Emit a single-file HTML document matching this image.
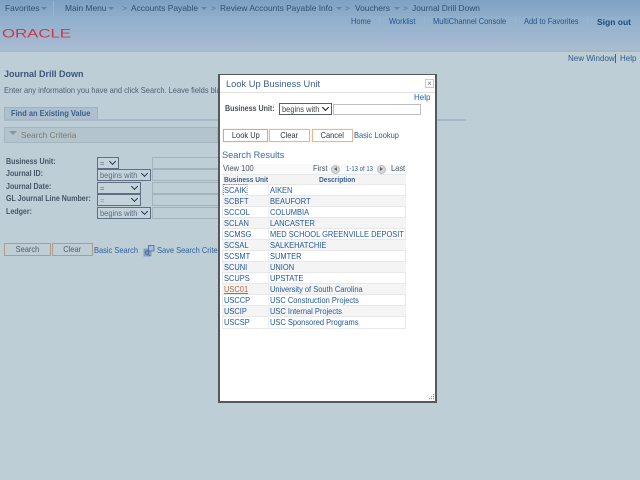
<!DOCTYPE html>
<html><head><meta charset="utf-8"><style>
html,body{margin:0;padding:0}
body{width:640px;height:480px;overflow:hidden;position:relative;background:#bdced7;font-family:"Liberation Sans",sans-serif;font-size:8.4px;color:#3f5f86}
#w{position:absolute;left:0;top:0;width:640px;height:480px;overflow:hidden;filter:blur(.25px)}
.t{position:absolute;white-space:nowrap;line-height:11px}
.b{position:absolute;box-sizing:border-box}
.n,.hl{font-size:8.5px;transform:scaleX(.88);transform-origin:0 50%}
.hl{color:#24548a}
.lab{font-weight:bold;color:#465564;font-size:8.2px;transform:scaleX(.865);transform-origin:0 50%}
.sel{position:absolute;box-sizing:border-box;height:12px;border:1px solid #5d6f80;background:#c4d3db;color:#5c6c7b;font-size:8.5px;line-height:10px;padding-left:2px;white-space:nowrap}
.s{display:inline-block;transform:scaleX(.88);transform-origin:0 50%}
.sel i{position:absolute;right:3px;top:1px;width:4px;height:4px;border-right:1.3px solid #26384a;border-bottom:1.3px solid #26384a;transform:rotate(45deg)}
.inp{position:absolute;box-sizing:border-box;height:12px;border:1px solid #a3b2bb}
.btn,.mbtn{position:absolute;box-sizing:border-box;height:13px;text-align:center;font-size:8.5px;line-height:11px}
.btn span,.mbtn span{display:inline-block;transform:scaleX(.88)}
.btn{border:1px solid #ad9d8c;background:#bfcdd4;color:#4c5d6c}
.mbtn{border:1px solid #e6b88c;background:#fff;color:#333;top:129px;box-shadow:0 0 1px #f0d0b0}
.row{position:absolute;left:222px;width:184px;height:11px;box-sizing:border-box;border-bottom:1px solid #e6e8e9;color:#23579e;font-size:8.6px;line-height:11px}
.row.a{background:#f4f4f4}
.row span{position:absolute;white-space:nowrap;top:0;transform:scaleX(.87);transform-origin:0 50%}
.row .c1{left:2px}.row .c2{left:48px}
.row:before{content:"";position:absolute;left:46px;top:0;bottom:0;width:1px;background:#eceded}
.tr{position:absolute;width:0;height:0}
</style></head><body><div id="w">

<div class="b" style="left:0;top:0;width:640px;height:16px;background:linear-gradient(#7fa2c2,#8dadca)"></div>
<div class="b" style="left:0;top:16px;width:640px;height:35px;background:linear-gradient(#8fb0cc,#9fb6cf 60%,#aabdd2)"></div>
<div class="b" style="left:0;top:50px;width:640px;height:2px;background:#a5b8c6"></div>
<div class="b" style="left:53px;top:1px;width:1px;height:15px;background:#9ab4cb"></div>

<div class="t" style="left:5px;top:3px;color:#2f4f73">Favorites</div>
<div class="tr" style="left:41px;top:7px;border-left:3px solid transparent;border-right:3px solid transparent;border-top:3px solid #5f86aa"></div>
<div class="t" style="left:65px;top:3px;color:#2f4f73">Main Menu</div>
<div class="tr" style="left:108px;top:7px;border-left:3px solid transparent;border-right:3px solid transparent;border-top:3px solid #5f86aa"></div>
<div class="t" style="left:122px;top:3px;color:#56779a">&gt;</div>
<div class="t" style="left:131px;top:3px;color:#2f4f73">Accounts Payable</div>
<div class="tr" style="left:201px;top:7px;border-left:3px solid transparent;border-right:3px solid transparent;border-top:3px solid #5f86aa"></div>
<div class="t" style="left:211px;top:3px;color:#56779a">&gt;</div>
<div class="t" style="left:220px;top:3px;color:#2f4f73">Review Accounts Payable Info</div>
<div class="tr" style="left:336px;top:7px;border-left:3px solid transparent;border-right:3px solid transparent;border-top:3px solid #5f86aa"></div>
<div class="t" style="left:345px;top:3px;color:#56779a">&gt;</div>
<div class="t" style="left:355px;top:3px;color:#2f4f73">Vouchers</div>
<div class="tr" style="left:394px;top:7px;border-left:3px solid transparent;border-right:3px solid transparent;border-top:3px solid #5f86aa"></div>
<div class="t" style="left:403px;top:3px;color:#56779a">&gt;</div>
<div class="t" style="left:412px;top:3px;color:#2f4f73">Journal Drill Down</div>

<svg class="b" style="left:2px;top:27px" width="72" height="13" viewBox="0 0 72 13"><text x="0" y="10.5" font-family="Liberation Sans" font-size="12" textLength="69" lengthAdjust="spacingAndGlyphs" fill="#c9384f">ORACLE</text></svg>

<div class="t hl" style="left:351px;top:16px">Home</div>
<div class="b" style="left:379px;top:17px;width:1px;height:9px;background:#9db5ca"></div>
<div class="t hl" style="left:389px;top:16px">Worklist</div>
<div class="b" style="left:424px;top:17px;width:1px;height:9px;background:#9db5ca"></div>
<div class="t hl" style="left:433px;top:16px">MultiChannel Console</div>
<div class="b" style="left:515px;top:17px;width:1px;height:9px;background:#9db5ca"></div>
<div class="t hl" style="left:524px;top:16px">Add to Favorites</div>
<div class="b" style="left:587px;top:17px;width:1px;height:9px;background:#9db5ca"></div>
<div class="t" style="left:597px;top:17px;color:#1b4a80;font-weight:bold;font-size:8.5px">Sign out</div>

<div class="t" style="left:568px;top:53px;color:#34598a;font-size:8px">New Window</div>
<div class="b" style="left:615px;top:54px;width:1px;height:9px;background:#4b5f73"></div>
<div class="t" style="left:620px;top:53px;color:#34598a;font-size:8px">Help</div>

<div class="t" style="left:4px;top:69px;font-weight:bold;font-size:9px;color:#3d5578">Journal Drill Down</div>
<div class="t n" style="left:4px;top:85px;color:#4e6070">Enter any information you have and click Search. Leave fields blank for a list of all values.</div>

<div class="b" style="left:4px;top:107px;width:94px;height:13px;background:#aebfd0;border:1px solid #9fb1c2;border-bottom:none"></div>
<div class="t n" style="left:11px;top:108px;font-weight:bold;color:#3d5e86">Find an Existing Value</div>
<div class="b" style="left:4px;top:119px;width:462px;height:2px;background:#a7b8c8"></div>

<div class="b" style="left:4px;top:127px;width:214px;height:16px;background:#b3c4cd;border:1px solid #a4b6c0"></div>
<div class="tr" style="left:9px;top:131px;border-left:4px solid transparent;border-right:4px solid transparent;border-top:4px solid #8696a3"></div>
<div class="t" style="left:21px;top:130px;font-size:8.3px;color:#7b7a70">Search Criteria</div>

<div class="t lab" style="left:6px;top:156px">Business Unit:</div>
<div class="t lab" style="left:6px;top:168px">Journal ID:</div>
<div class="t lab" style="left:6px;top:181px">Journal Date:</div>
<div class="t lab" style="left:6px;top:193px">GL Journal Line Number:</div>
<div class="t lab" style="left:6px;top:206px">Ledger:</div>

<div class="sel" style="left:97px;top:157px;width:22px"><span class="s">=</span><i></i></div>
<div class="sel" style="left:97px;top:169px;width:54px"><span class="s">begins with</span><i></i></div>
<div class="sel" style="left:97px;top:182px;width:44px"><span class="s">=</span><i></i></div>
<div class="sel" style="left:97px;top:194px;width:44px;color:#8b9aa6"><span class="s">=</span><i></i></div>
<div class="sel" style="left:97px;top:207px;width:54px"><span class="s">begins with</span><i></i></div>
<div class="inp" style="left:152px;top:157px;width:70px"></div>
<div class="inp" style="left:152px;top:169px;width:70px"></div>
<div class="inp" style="left:152px;top:182px;width:70px"></div>
<div class="inp" style="left:152px;top:194px;width:70px"></div>
<div class="inp" style="left:152px;top:207px;width:70px"></div>

<div class="btn" style="left:4px;top:243px;width:47px"><span>Search</span></div>
<div class="btn" style="left:52px;top:243px;width:41px"><span>Clear</span></div>
<div class="t n" style="left:94px;top:245px;color:#2f5f96">Basic Search</div>
<svg class="b" style="left:143px;top:245px" width="12" height="12" viewBox="0 0 12 12"><rect x="0.5" y="3.5" width="8" height="8" fill="#7f9fc2"/><rect x="5.5" y="0.5" width="5.5" height="5.5" fill="#a7bdd4" stroke="#466b94" stroke-width=".8"/><circle cx="4" cy="7.5" r="1.7" fill="none" stroke="#46658a" stroke-width=".8"/><path d="M5 9L7 11" stroke="#46658a" stroke-width=".8"/></svg>
<div class="t n" style="left:157px;top:245px;color:#2f5f96">Save Search Criteria</div>

<!-- modal -->
<div class="b" style="left:218px;top:74px;width:219px;height:329px;background:#fff;border:1px solid #55595d;border-width:1px 2px 2px 2px"></div>
<div class="t" style="left:226px;top:79px;font-size:9.3px;color:#3c5f8c">Look Up Business Unit</div>
<div class="b" style="left:220px;top:92px;width:215px;height:1px;background:#dfe1e3"></div>
<div class="b" style="left:425px;top:79px;width:9px;height:9px;border:1px solid #c9ccce;color:#777;font-size:8px;line-height:7px;text-align:center">×</div>
<div class="t" style="left:414px;top:92px;color:#25609f;font-size:8px">Help</div>

<div class="t lab" style="left:225px;top:103px;color:#4a4f55">Business Unit:</div>
<div class="b" style="left:279px;top:103px;width:53px;height:12px;border:1px solid #5a5f64;background:#fff;color:#444;font-size:8.5px;line-height:10px;padding-left:2px;white-space:nowrap"><span class="s">begins with</span><i style="position:absolute;right:3px;top:1px;width:4px;height:4px;border-right:1.3px solid #111;border-bottom:1.3px solid #111;transform:rotate(45deg)"></i></div>
<div class="b" style="left:333px;top:104px;width:88px;height:11px;border:1px solid #bcbfc2;background:#fff"></div>

<div class="mbtn" style="left:223px;width:45px;border-color:#e0a877"><span>Look Up</span></div>
<div class="mbtn" style="left:269px;width:41px"><span>Clear</span></div>
<div class="mbtn" style="left:312px;width:41px"><span>Cancel</span></div>
<div class="t n" style="left:354px;top:130px;color:#2a5a98">Basic Lookup</div>

<div class="t" style="left:222px;top:150px;font-size:9.2px;color:#3c6a9f">Search Results</div>

<div class="b" style="left:222px;top:164px;width:184px;height:10px;background:#fafafa"></div>
<div class="t n" style="left:223px;top:163px;color:#4b5560">View 100</div>
<div class="t n" style="left:313px;top:163px;color:#4b5560">First</div>
<div class="b" style="left:331px;top:165px;width:9px;height:9px;border-radius:50%;background:#d5d8db;border:1px solid #bbb"></div>
<div class="tr" style="left:334px;top:167px;border-top:2.5px solid transparent;border-bottom:2.5px solid transparent;border-right:3px solid #666"></div>
<div class="t" style="left:346px;top:164px;font-size:7px;transform:scaleX(.857);transform-origin:0 50%;color:#3c5f8c">1-13 of 13</div>
<div class="b" style="left:377px;top:165px;width:9px;height:9px;border-radius:50%;background:#d5d8db;border:1px solid #bbb"></div>
<div class="tr" style="left:380px;top:167px;border-top:2.5px solid transparent;border-bottom:2.5px solid transparent;border-left:3px solid #666"></div>
<div class="t n" style="left:391px;top:163px;color:#4b5560">Last</div>

<div class="b" style="left:222px;top:174px;width:184px;height:11px;background:#f4f4f4;border-top:1px solid #e6e8e9;border-bottom:1px solid #e6e8e9"></div>
<div class="t" style="left:224px;top:174px;font-size:7.6px;transform:scaleX(.87);transform-origin:0 50%;font-weight:bold;color:#3b5f8f">Business Unit</div>
<div class="t" style="left:319px;top:174px;font-size:7.6px;transform:scaleX(.87);transform-origin:0 50%;font-weight:bold;color:#3b5f8f">Description</div>

<div class="b" style="left:222px;top:185px;width:184px;height:144px;border-left:1px solid #e6e8e9;border-right:1px solid #e6e8e9"></div>
<div class="row" style="top:185px"><span class="c1" style="outline:1px dotted #778">SCAIK</span><span class="c2">AIKEN</span></div>
<div class="row a" style="top:196px"><span class="c1">SCBFT</span><span class="c2">BEAUFORT</span></div>
<div class="row" style="top:207px"><span class="c1">SCCOL</span><span class="c2">COLUMBIA</span></div>
<div class="row a" style="top:218px"><span class="c1">SCLAN</span><span class="c2">LANCASTER</span></div>
<div class="row" style="top:229px"><span class="c1">SCMSG</span><span class="c2">MED SCHOOL GREENVILLE DEPOSIT</span></div>
<div class="row a" style="top:240px"><span class="c1">SCSAL</span><span class="c2">SALKEHATCHIE</span></div>
<div class="row" style="top:251px"><span class="c1">SCSMT</span><span class="c2">SUMTER</span></div>
<div class="row a" style="top:262px"><span class="c1">SCUNI</span><span class="c2">UNION</span></div>
<div class="row" style="top:273px"><span class="c1">SCUPS</span><span class="c2">UPSTATE</span></div>
<div class="row a" style="top:284px"><span class="c1" style="color:#b5683a;text-decoration:underline">USC01</span><span class="c2">University of South Carolina</span></div>
<div class="row" style="top:295px"><span class="c1">USCCP</span><span class="c2">USC Construction Projects</span></div>
<div class="row a" style="top:306px"><span class="c1">USCIP</span><span class="c2">USC Internal Projects</span></div>
<div class="row" style="top:317px;height:12px"><span class="c1">USCSP</span><span class="c2">USC Sponsored Programs</span></div>

<svg class="b" style="left:428px;top:394px" width="7" height="7" viewBox="0 0 7 7" fill="#9a9a9a"><rect x="5" y="0" width="1.2" height="1.2"/><rect x="3" y="2" width="1.2" height="1.2"/><rect x="5" y="2" width="1.2" height="1.2"/><rect x="1" y="4" width="1.2" height="1.2"/><rect x="3" y="4" width="1.2" height="1.2"/><rect x="5" y="4" width="1.2" height="1.2"/></svg>
</div></body></html>
